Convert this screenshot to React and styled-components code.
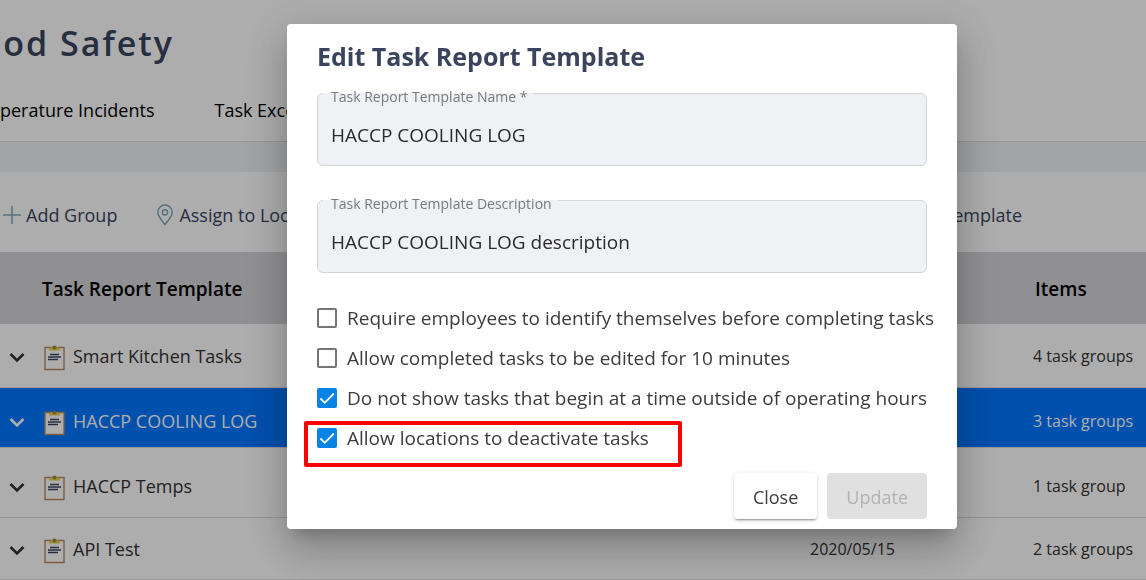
import { useState } from 'react';
import styled, { createGlobalStyle } from 'styled-components';

const GlobalStyle = createGlobalStyle`
  * {
    box-sizing: border-box;
  }

  body {
    margin: 0;
    overflow: hidden;
    background: #fff;
    color: #333;
    font-family: 'Open Sans', sans-serif;
    font-size: 18px;
  }

  button, input {
    font-family: inherit;
  }
`;

const Page = styled.div`
  height: 100vh;
  overflow: hidden;
`;

const Header = styled.header`
  height: 142px;
  border-bottom: 1px solid #dcdcdc;
`;

const PageTitle = styled.h1`
  display: flex;
  justify-content: flex-end;
  width: 174px;
  margin: 0;
  padding-top: 19px;
  color: #3a445d;
  font-size: 34px;
  font-weight: 600;
  line-height: 48px;
  letter-spacing: 2px;
  white-space: nowrap;
`;

const Tabs = styled.nav`
  display: flex;
  gap: 60px;
  padding-top: 31px;
`;

const Tab = styled.a`
  color: #000;
  font-size: 18px;
  font-weight: 500;
  line-height: 24px;
  text-decoration: none;
  white-space: nowrap;
`;

const Band = styled.div`
  height: 30px;
  background: #eef1f4;
`;

const Toolbar = styled.div`
  display: flex;
  align-items: center;
  gap: 38px;
  height: 80px;
  padding: 6px 124px 0 2px;
`;

const ToolButton = styled.button`
  display: flex;
  align-items: center;
  gap: 4px;
  margin-left: ${p => (p.$last ? 'auto' : '0')};
  padding: 0;
  border: 0;
  background: none;
  color: #3a445d;
  font-size: 18px;
  line-height: 24px;

  svg {
    fill: none;
    stroke: #7fa9b8;
    stroke-width: 1.5;
  }
`;

const Table = styled.table`
  width: 100%;
  border-collapse: collapse;
  table-layout: fixed;
`;

const HeadCell = styled.th`
  width: ${p => p.$width || 'auto'};
  height: 72px;
  padding: 2px 0 0 ${p => p.$indent || '0'};
  background: #d5d5d8;
  color: #000;
  font-size: 19px;
  font-weight: 600;
  line-height: 24px;
  text-align: left;
`;

const Row = styled.tr`
  height: ${p => p.$height};
  background: ${p => (p.$selected ? '#0076ff' : '#fff')};
  color: ${p => (p.$selected ? '#fff' : '#333')};
  box-shadow: inset 0 -1px 0 #dcdcdc;
`;

const Cell = styled.td`
  padding: ${p => (p.$low ? '6px' : '0')} 0 0;
  font-size: ${p => (p.$small ? '16px' : '18px')};
  line-height: 24px;
  white-space: nowrap;
`;

const NameCell = styled.div`
  display: flex;
  align-items: center;
  padding-left: 9px;

  svg:first-child {
    margin-right: 19px;
  }

  svg + svg {
    margin-right: 8px;
  }
`;

const Backdrop = styled.div`
  position: fixed;
  inset: 0;
  display: flex;
  align-items: flex-start;
  justify-content: center;
  padding: 24px 0 24px 98px;
  background: rgba(0, 0, 0, 0.32);
`;

const Dialog = styled.form`
  width: 670px;
  padding: 15px 30px 10px;
  border-radius: 4px;
  background: #fff;
  box-shadow: 0 11px 15px -7px rgba(0, 0, 0, 0.2),
    0 24px 38px 3px rgba(0, 0, 0, 0.14), 0 9px 46px 8px rgba(0, 0, 0, 0.12);
`;

const DialogTitle = styled.h2`
  margin: 0 0 20px;
  color: #3a445d;
  font-size: 25px;
  font-weight: 700;
  line-height: 34px;
`;

const Field = styled.div`
  position: relative;
  margin-bottom: 34px;
`;

/* the strip in the label's background opens a notch in the field's border */
const FieldLabel = styled.label`
  position: absolute;
  top: -6px;
  left: 6px;
  padding: 0 6px 0 8px;
  background: linear-gradient(#f0f1f5, #f0f1f5) 0 6px / 100% 1px no-repeat;
  color: #7a7a7a;
  font-size: 14px;
  line-height: 20px;
`;

const FieldInput = styled.input`
  display: block;
  width: 100%;
  height: 73px;
  padding: 10px 13px 0;
  border: 1px solid #d4d5d8;
  border-radius: 6px;
  outline: 0;
  background: #f0f1f5;
  color: #2b2b2b;
  font-size: 19px;
`;

const Option = styled.label`
  position: relative;
  display: flex;
  align-items: flex-start;
  gap: 10px;
  height: 40px;
  color: #3c3c3c;
  font-size: 19px;
  line-height: 22px;
  white-space: nowrap;
`;

const Tick = styled.span`
  display: grid;
  margin-top: 1px;

  > * {
    grid-area: 1 / 1;
  }

  svg {
    pointer-events: none;
  }
`;

const TickInput = styled.input`
  width: 20px;
  height: 20px;
  margin: 0;
  border: 2px solid #757575;
  border-radius: 2px;
  appearance: none;

  &:checked {
    border-color: #0783e5;
    background: #0783e5;
  }
`;

const Highlight = styled.span`
  position: absolute;
  top: -6px;
  left: -13px;
  width: 378px;
  height: 46px;
  border: 4px solid #f00;
  border-radius: 2px;
  pointer-events: none;
`;

const Actions = styled.div`
  display: flex;
  justify-content: flex-end;
  gap: 10px;
  padding-top: 6px;
`;

const Button = styled.button`
  height: 46px;
  padding: 2px 19px 0;
  border: 0;
  border-radius: 4px;
  background: #fff;
  box-shadow: 0 3px 1px -2px rgba(0, 0, 0, 0.2),
    0 2px 2px 0 rgba(0, 0, 0, 0.14), 0 1px 5px 0 rgba(0, 0, 0, 0.12);
  color: #3c3c3c;
  font-size: 18px;

  &:disabled {
    background: #e0e0e0;
    box-shadow: none;
    color: #b3b3b3;
  }
`;

const rows = [
  { name: 'Smart Kitchen Tasks', items: '4 task groups', height: '64px' },
  {
    name: 'HACCP COOLING LOG',
    items: '3 task groups',
    height: '60px',
    selected: true,
    low: true,
  },
  { name: 'HACCP Temps', items: '1 task group', height: '70px', low: true },
  {
    name: 'API Test',
    date: '2020/05/15',
    items: '2 task groups',
    height: '62px',
  },
];

const options = [
  'Require employees to identify themselves before completing tasks',
  'Allow completed tasks to be edited for 10 minutes',
  'Do not show tasks that begin at a time outside of operating hours',
  'Allow locations to deactivate tasks',
];

const Chevron = () => (
  <svg width="16" height="24" viewBox="0 0 16 24" fill="none">
    <path d="M1.5 10 8 16.5 14.5 10" stroke="currentColor" strokeWidth="2.6" />
  </svg>
);

const Clipboard = () => (
  <svg width="21" height="30" viewBox="0 0 21 30">
    <path d="M1 6.5h19v22H1z" fill="#fff" stroke="#b88a62" strokeWidth="1.4" />
    <path d="M5 9.5V7.5L7.5 6h6L16 7.5v2z" fill="#e9cf45" />
    <circle cx="10.5" cy="6.5" r="2.1" fill="#9b8a4c" />
    <path
      d="M6 13.5h9M4 16h13M4 18.500h10"
      stroke="#3a445d"
      strokeWidth="1.3"
    />
  </svg>
);

export default function App() {
  const [name, setName] = useState('HACCP COOLING LOG');
  const [description, setDescription] = useState(
    'HACCP COOLING LOG description'
  );
  const [checked, setChecked] = useState([false, false, true, true]);

  const toggle = index => {
    setChecked(prev => prev.map((v, i) => (i === index ? !v : v)));
  };

  return (
    <>
      <GlobalStyle />
      <Page>
        <Header>
          <PageTitle>ood Safety</PageTitle>
          <Tabs>
            <Tab href="#incidents">perature Incidents</Tab>
            <Tab href="#exceptions">Task Exceptions</Tab>
          </Tabs>
        </Header>
        <Band />
        <Toolbar>
          <ToolButton type="button">
            <svg width="20" height="20" viewBox="0 0 20 20">
              <path d="M10 1v18M1 10h18" />
            </svg>
            Add Group
          </ToolButton>
          <ToolButton type="button">
            <svg width="20" height="22" viewBox="0 0 20 22">
              <path d="M10 20.5C7 16.5 2.8 12.5 2.8 8.3a7.2 7.2 0 0 1 14.4 0C17.2 12.5 13 16.5 10 20.5z" />
              <circle cx="10" cy="8.3" r="2.6" />
            </svg>
            Assign to Locations
          </ToolButton>
          <ToolButton type="button" $last>
            Delete Template
          </ToolButton>
        </Toolbar>
        <Table>
          <thead>
            <tr>
              <HeadCell $indent="42px">Task Report Template</HeadCell>
              <HeadCell $width="223px" aria-label="Date" />
              <HeadCell $width="113px" $indent="2px">
                Items
              </HeadCell>
            </tr>
          </thead>
          <tbody>
            {rows.map(row => (
              <Row key={row.name} $height={row.height} $selected={row.selected}>
                <Cell $low={row.low}>
                  <NameCell>
                    <Chevron />
                    <Clipboard />
                    {row.name}
                  </NameCell>
                </Cell>
                <Cell $low={row.low} $small>
                  {row.date}
                </Cell>
                <Cell $low={row.low} $small>
                  {row.items}
                </Cell>
              </Row>
            ))}
          </tbody>
        </Table>
      </Page>
      <Backdrop>
        <Dialog role="dialog" aria-labelledby="dialog-title">
          <DialogTitle id="dialog-title">Edit Task Report Template</DialogTitle>
          <Field>
            <FieldInput
              id="name"
              value={name}
              onChange={evt => setName(evt.target.value)}
            />
            <FieldLabel htmlFor="name">Task Report Template Name *</FieldLabel>
          </Field>
          <Field>
            <FieldInput
              id="description"
              value={description}
              onChange={evt => setDescription(evt.target.value)}
            />
            <FieldLabel htmlFor="description">
              Task Report Template Description
            </FieldLabel>
          </Field>
          {options.map((text, index) => (
            <Option key={text}>
              <Tick>
                <TickInput
                  type="checkbox"
                  checked={checked[index]}
                  onChange={() => toggle(index)}
                />
                {checked[index] && (
                  <svg width="20" height="20" viewBox="0 0 20 20">
                    <path
                      d="M3.5 10.5 7.8 14.8 16.8 5.5"
                      fill="none"
                      stroke="#fff"
                      strokeWidth="1.8"
                    />
                  </svg>
                )}
              </Tick>
              {text}
              {index === 3 && <Highlight />}
            </Option>
          ))}
          <Actions>
            <Button type="button">Close</Button>
            <Button type="submit" disabled>
              Update
            </Button>
          </Actions>
        </Dialog>
      </Backdrop>
    </>
  );
}
